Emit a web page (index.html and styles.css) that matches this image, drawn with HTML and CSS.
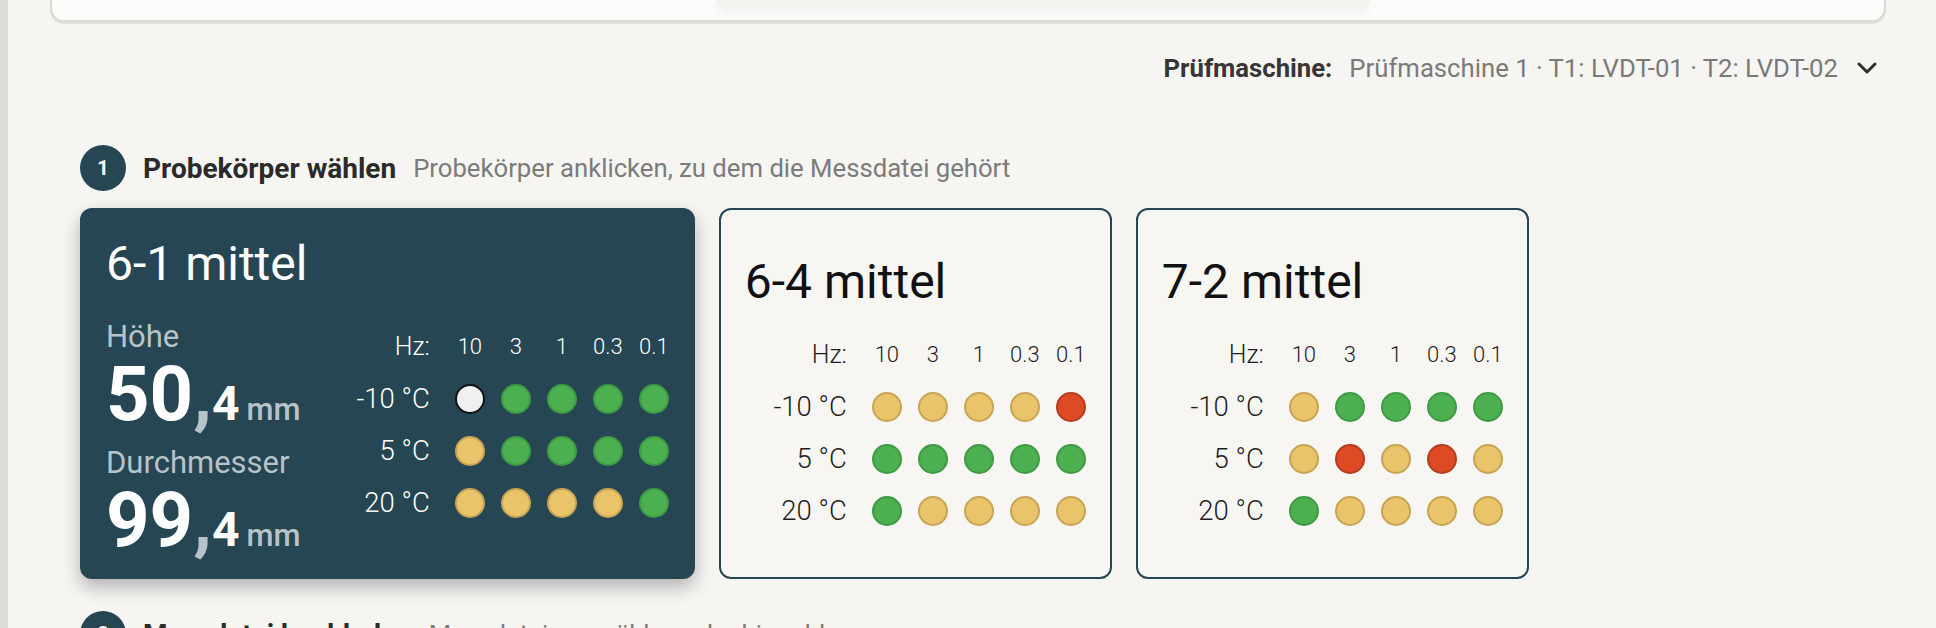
FILE: index.html
```
<!DOCTYPE html>
<html lang="de">
<head>
<meta charset="utf-8">
<title>Messdatei zuordnen</title>
<link rel="stylesheet" href="styles.css">
</head>
<body>
<div class="app">
  <aside class="rail"></aside>
  <main class="main">
    <div class="topcard"><div class="topcard-glow"></div></div>

    <div class="machine">
      <span class="machine-label">Prüfmaschine:</span>
      <span class="machine-value">Prüfmaschine 1 · T1: LVDT-01 · T2: LVDT-02</span>
      <svg class="chevron" width="22" height="14" viewBox="0 0 22 14"><polyline points="3,3 11,11 19,3" fill="none" stroke="#2d2d2d" stroke-width="3" stroke-linecap="round" stroke-linejoin="round"/></svg>
    </div>

    <section class="step">
      <div class="step-head">
        <span class="step-num">1</span>
        <span class="step-title">Probekörper wählen</span>
        <span class="step-desc">Probekörper anklicken, zu dem die Messdatei gehört</span>
      </div>

      <div class="cards">
        <div class="card selected">
          <div class="card-title">6-1 mittel</div>
          <div class="card-body">
            <div class="dims">
              <div class="dim">
                <div class="dim-label">Höhe</div>
                <div class="dim-value">50<span class="comma">,</span><span class="dec">4</span><span class="unit">mm</span></div>
              </div>
              <div class="dim">
                <div class="dim-label">Durchmesser</div>
                <div class="dim-value">99<span class="comma">,</span><span class="dec">4</span><span class="unit">mm</span></div>
              </div>
            </div>
            <div class="matrix">
              <span class="hz-label">Hz:</span><span class="hz">10</span><span class="hz">3</span><span class="hz">1</span><span class="hz">0.3</span><span class="hz">0.1</span>
              <span class="temp">-10 °C</span><span class="dot w"></span><span class="dot g"></span><span class="dot g"></span><span class="dot g"></span><span class="dot g"></span>
              <span class="temp">5 °C</span><span class="dot y"></span><span class="dot g"></span><span class="dot g"></span><span class="dot g"></span><span class="dot g"></span>
              <span class="temp">20 °C</span><span class="dot y"></span><span class="dot y"></span><span class="dot y"></span><span class="dot y"></span><span class="dot g"></span>
            </div>
          </div>
        </div>

        <div class="card">
          <div class="card-title">6-4 mittel</div>
          <div class="matrix">
            <span class="hz-label">Hz:</span><span class="hz">10</span><span class="hz">3</span><span class="hz">1</span><span class="hz">0.3</span><span class="hz">0.1</span>
            <span class="temp">-10 °C</span><span class="dot y"></span><span class="dot y"></span><span class="dot y"></span><span class="dot y"></span><span class="dot r"></span>
            <span class="temp">5 °C</span><span class="dot g"></span><span class="dot g"></span><span class="dot g"></span><span class="dot g"></span><span class="dot g"></span>
            <span class="temp">20 °C</span><span class="dot g"></span><span class="dot y"></span><span class="dot y"></span><span class="dot y"></span><span class="dot y"></span>
          </div>
        </div>

        <div class="card">
          <div class="card-title">7-2 mittel</div>
          <div class="matrix">
            <span class="hz-label">Hz:</span><span class="hz">10</span><span class="hz">3</span><span class="hz">1</span><span class="hz">0.3</span><span class="hz">0.1</span>
            <span class="temp">-10 °C</span><span class="dot y"></span><span class="dot g"></span><span class="dot g"></span><span class="dot g"></span><span class="dot g"></span>
            <span class="temp">5 °C</span><span class="dot y"></span><span class="dot r"></span><span class="dot y"></span><span class="dot r"></span><span class="dot y"></span>
            <span class="temp">20 °C</span><span class="dot g"></span><span class="dot y"></span><span class="dot y"></span><span class="dot y"></span><span class="dot y"></span>
          </div>
        </div>
      </div>
    </section>

    <section class="step step-next">
      <div class="step-head">
        <span class="step-num">2</span>
        <span class="step-title">Messdatei hochladen</span>
        <span class="step-desc">Messdatei auswählen oder hier ablegen</span>
      </div>
    </section>
  </main>
</div>
</body>
</html>
```
FILE: styles.css
```
* { box-sizing: border-box; }

html, body {
  margin: 0;
  height: 628px;
  overflow: hidden;
}

body {
  background: #f6f5f2;
  font-family: Roboto, "Liberation Sans", sans-serif;
  color: #222;
}

.app {
  display: flex;
  height: 628px;
}

.rail {
  width: 8px;
  flex: none;
  background: #dddbd6;
}

.main {
  flex: 1;
  padding: 0 50px 0 42px;
}

/* top card (cut at the top of the viewport) */
.topcard {
  height: 22px;
  background: #fdfcfa;
  border: 2px solid #dcdad5;
  border-top: 0;
  border-radius: 0 0 14px 14px;
  box-shadow: 0 2px 0 #e3e1dc;
  display: flex;
  overflow: hidden;
}

.topcard-glow {
  width: 654px;
  height: 10px;
  margin-left: 664px;
  background: #f4f3f0;
  border-radius: 0 0 30px 30px;
  box-shadow: 0 4px 10px #f4f3f0;
}

/* machine selector */
.machine {
  display: flex;
  justify-content: flex-end;
  align-items: center;
  margin-top: 31px;
  padding-right: 8px;
  font-size: 25.7px;
  line-height: 30px;
}

.machine-label {
  font-weight: 700;
  color: #363636;
}

.machine-value {
  margin-left: 17px;
  color: #7a7a7a;
}

.chevron {
  margin-left: 18px;
}

/* steps */
.step {
  padding-left: 30px;
  margin-top: 62px;
}

.step-head {
  display: flex;
  align-items: center;
  gap: 17px;
}

.step-num {
  width: 46px;
  height: 46px;
  border-radius: 50%;
  background: #264653;
  color: #fff;
  font-size: 20px;
  font-weight: 700;
  display: flex;
  align-items: center;
  justify-content: center;
}

.step-title {
  font-size: 28px;
  font-weight: 700;
  color: #2a2a2a;
}

.step-desc {
  font-size: 25.7px;
  color: #7b7b7b;
}

.step-next {
  margin-top: 32px;
}

/* cards */
.cards {
  display: flex;
  gap: 24px;
  margin-top: 17px;
  align-items: stretch;
}

.card {
  min-width: 393px;
  border: 2px solid #264653;
  border-radius: 12px;
  background: #f7f6f3;
  padding: 26px 24px 33px;
  display: flex;
  flex-direction: column;
  justify-content: center;
}

.card.selected {
  background: #264653;
  color: #fff;
  padding-bottom: 18px;
  justify-content: flex-start;
  box-shadow: 0 8px 18px rgba(0, 0, 0, 0.28);
}

.card-title {
  font-size: 48px;
  line-height: 56px;
  font-weight: 400;
  color: #111;
}

.selected .card-title {
  color: #fff;
}

.card > .matrix {
  margin-top: 30px;
}

.card-body {
  display: flex;
  align-items: flex-start;
  gap: 56px;
  margin-top: 27px;
}

.card-body .matrix {
  margin-top: 13px;
}

/* dimensions */
.dim + .dim {
  margin-top: 12px;
}

.dim-label {
  font-size: 31px;
  line-height: 36px;
  color: #b8c3c9;
}

.dim-value {
  font-size: 76px;
  line-height: 78px;
  font-weight: 700;
  color: #fff;
  white-space: nowrap;
}

.dim-value span {
  line-height: 1;
}

.comma {
  color: #b8c3c9;
}

.dec {
  font-size: 48px;
}

.unit {
  font-size: 31px;
  font-weight: 500;
  color: #b8c3c9;
  margin-left: 7px;
}

/* measurement matrix */
.matrix {
  display: grid;
  grid-template-columns: 1fr repeat(5, 30px);
  column-gap: 16px;
  row-gap: 22px;
  align-items: center;
  font-weight: 300;
  color: #1e1e1e;
}

.selected .matrix {
  color: #fff;
}

.hz-label,
.hz {
  font-size: 22px;
  line-height: 30px;
}

.hz-label {
  font-size: 25px;
  text-align: right;
  padding-right: 9px;
}

.hz {
  display: flex;
  justify-content: center;
  white-space: nowrap;
}

.temp {
  font-size: 27.5px;
  line-height: 30px;
  text-align: right;
  padding-right: 9px;
  white-space: nowrap;
}

.dot {
  width: 30px;
  height: 30px;
  border-radius: 50%;
  border: 2px solid;
}

.dot.g { background: #4caf50; border-color: #3f9a44; }
.dot.y { background: #e9c46a; border-color: #c7a453; }
.dot.r { background: #de4a24; border-color: #b53d1e; }
.dot.w { background: #f0f0f0; border-color: #111; }
```
